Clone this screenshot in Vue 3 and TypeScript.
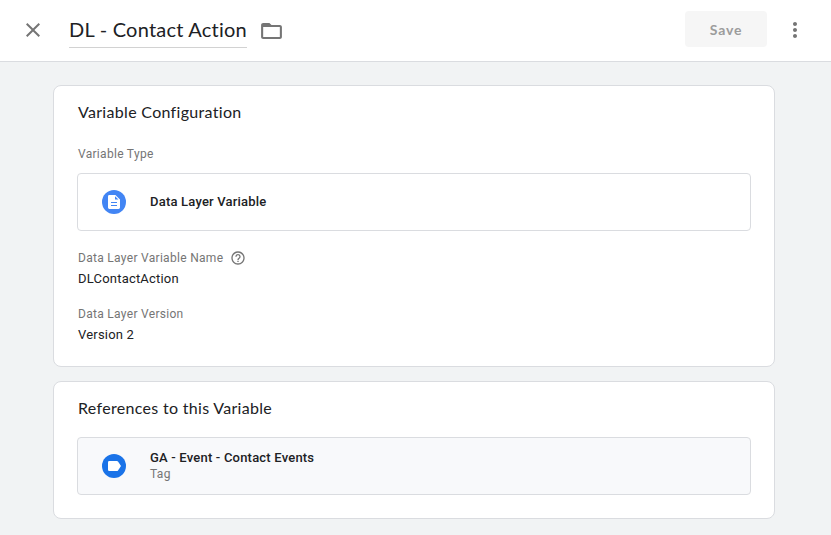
<script setup lang="ts">
interface Field {
  label: string
  value: string
  help: boolean
}

const title = 'DL - Contact Action'
const fields: Field[] = [
  { label: 'Data Layer Variable Name', value: 'DLContactAction', help: true },
  { label: 'Data Layer Version', value: 'Version 2', help: false },
]
</script>

<template>
  <div class="page">
    <header class="topbar">
      <button class="icon-button close" aria-label="Close">
        <svg width="24" height="24" viewBox="0 0 24 24"><path d="M19 6.41L17.59 5 12 10.59 6.41 5 5 6.41 10.59 12 5 17.59 6.41 19 12 13.41 17.59 19 19 17.59 13.41 12z" /></svg>
      </button>
      <h1 class="title"><span>{{ title }}</span></h1>
      <button class="icon-button folder" aria-label="Folder">
        <svg width="25" height="24" viewBox="0 0 24 24" preserveAspectRatio="none"><path d="M20 6h-8l-2-2H4c-1.1 0-1.99.9-1.99 2L2 18c0 1.1.9 2 2 2h16c1.1 0 2-.9 2-2V8c0-1.1-.9-2-2-2zm0 12H4V8h16v10z" /></svg>
      </button>
      <button class="save" disabled>Save</button>
      <button class="icon-button more" aria-label="More">
        <svg width="24" height="24" viewBox="0 0 24 24"><path d="M12 8c1.1 0 2-.9 2-2s-.9-2-2-2-2 .9-2 2 .9 2 2 2zm0 2c-1.1 0-2 .9-2 2s.9 2 2 2 2-.9 2-2-.9-2-2-2zm0 6c-1.1 0-2 .9-2 2s.9 2 2 2 2-.9 2-2-.9-2-2-2z" /></svg>
      </button>
    </header>

    <main class="content">
      <section class="card config">
        <h2 class="heading">Variable Configuration</h2>
        <div class="label type-label">Variable Type</div>
        <div class="box">
          <svg class="badge" width="24" height="24" viewBox="0 0 24 24">
            <circle cx="12" cy="12" r="12" fill="#4285f4" />
            <path fill="#fff" d="M7.4 5h6l4.600 4.500V17.600a1.400 1.400 0 0 1-1.400 1.400H7.400A1.400 1.400 0 0 1 6 17.600V6.400A1.400 1.400 0 0 1 7.400 5z" />
            <path fill="#4285f4" d="M13 6.200V9.500H16.500zM9 12.100h6v1H9zM9 15.100h6v1H9z" />
          </svg>
          <div class="name">Data Layer Variable</div>
        </div>
        <div v-for="field in fields" :key="field.label" class="field">
          <div class="label">
            <span>{{ field.label }}</span>
            <svg v-if="field.help" class="help" width="16" height="16" viewBox="0 0 24 24"><path d="M11 18h2v-2h-2v2zm1-16C6.480 2 2 6.480 2 12s4.480 10 10 10 10-4.480 10-10S17.520 2 12 2zm0 18c-4.410 0-8-3.590-8-8s3.590-8 8-8 8 3.590 8 8-3.590 8-8 8zm0-14c-2.210 0-4 1.790-4 4h2c0-1.100.9-2 2-2s2 .9 2 2c0 2-3 1.750-3 5h2c0-2.250 3-2.500 3-5 0-2.210-1.790-4-4-4z" /></svg>
          </div>
          <div class="value">{{ field.value }}</div>
        </div>
      </section>

      <section class="card references">
        <h2 class="heading">References to this Variable</h2>
        <div class="box tinted">
          <svg class="badge" width="24" height="24" viewBox="0 0 24 24">
            <circle cx="12" cy="12" r="12" fill="#1a73e8" />
            <path fill="#fff" d="M7.300 7h7.500c.5 0 .9.200 1.200.6l3 4.400-3 4.400c-.3.400-.7.600-1.200.6H7.300A1.300 1.300 0 0 1 6 15.700V8.300A1.300 1.300 0 0 1 7.300 7z" />
          </svg>
          <div>
            <div class="name">GA - Event - Contact Events</div>
            <div class="kind">Tag</div>
          </div>
        </div>
      </section>
    </main>
  </div>
</template>

<style>
body {
  margin: 0;
  background: #f1f3f4;
}
</style>

<style scoped>
.page {
  box-sizing: border-box;
  height: 535px;
  overflow: hidden;
  background: #f1f3f4;
  color: #202124;
  font-family: Roboto, "Liberation Sans", sans-serif;
}
.topbar {
  box-sizing: border-box;
  display: flex;
  align-items: flex-start;
  height: 62px;
  padding: 0 24px 0 21px;
  background: #fff;
  border-bottom: 1px solid #dadce0;
}
.icon-button {
  display: block;
  padding: 0;
  border: 0;
  background: none;
  line-height: 0;
  flex: none;
}
.icon-button svg,
.help {
  display: block;
  fill: #757575;
}
.close {
  margin-top: 18px;
}
.title {
  box-sizing: border-box;
  width: 178px;
  height: 32px;
  margin: 16px 0 0 24px;
  border-bottom: 1px solid #d2d2d2;
  font: 400 20px/27px Lato, sans-serif;
  letter-spacing: 0.23px;
  white-space: nowrap;
}
.folder {
  margin: 19px 0 0 12px;
}
.save {
  width: 82px;
  height: 36px;
  margin: 11px 0 0 auto;
  padding: 2px 0 0;
  border: 0;
  border-radius: 4px;
  background: #f6f6f6;
  color: #9c9c9c;
  font: 700 14px/34px Lato, sans-serif;
  letter-spacing: 0.8px;
}
.more {
  margin: 18px 0 0 16px;
}
.content {
  display: flex;
  flex-direction: column;
  gap: 14px;
  padding: 23px 56px 0 53px;
}
.card {
  box-sizing: border-box;
  padding: 0 23px;
  background: #fff;
  border: 1px solid #dadce0;
  border-radius: 8px;
}
.config {
  height: 282px;
}
.references {
  height: 138px;
}
.heading {
  margin: 14px 0 0 1px;
  font: 400 16px/24px Lato, sans-serif;
  letter-spacing: 0.31px;
  white-space: nowrap;
}
.label {
  display: flex;
  align-items: center;
  height: 16px;
  margin-left: 1px;
  color: #757575;
  font-size: 12px;
  line-height: 16px;
  letter-spacing: 0.3px;
}
.type-label {
  margin-top: 22px;
}
.box {
  box-sizing: border-box;
  display: flex;
  align-items: center;
  height: 58px;
  margin-top: 11px;
  padding-left: 24px;
  border: 1px solid #dadce0;
  border-radius: 4px;
}
.references .box {
  margin-top: 17px;
}
.tinted {
  background: #f8f9fb;
}
.badge {
  flex: none;
  margin-right: 24px;
}
.name {
  font-size: 13px;
  font-weight: 500;
  line-height: 16px;
  letter-spacing: 0.2px;
}
.kind {
  color: #757575;
  font-size: 12px;
  line-height: 16px;
  letter-spacing: 0.3px;
}
.field {
  height: 37px;
  margin-top: 19px;
}
.help {
  margin-left: 7px;
}
.value {
  margin: 5px 0 0 1px;
  font-size: 13px;
  line-height: 16px;
  letter-spacing: 0.2px;
}
</style>
